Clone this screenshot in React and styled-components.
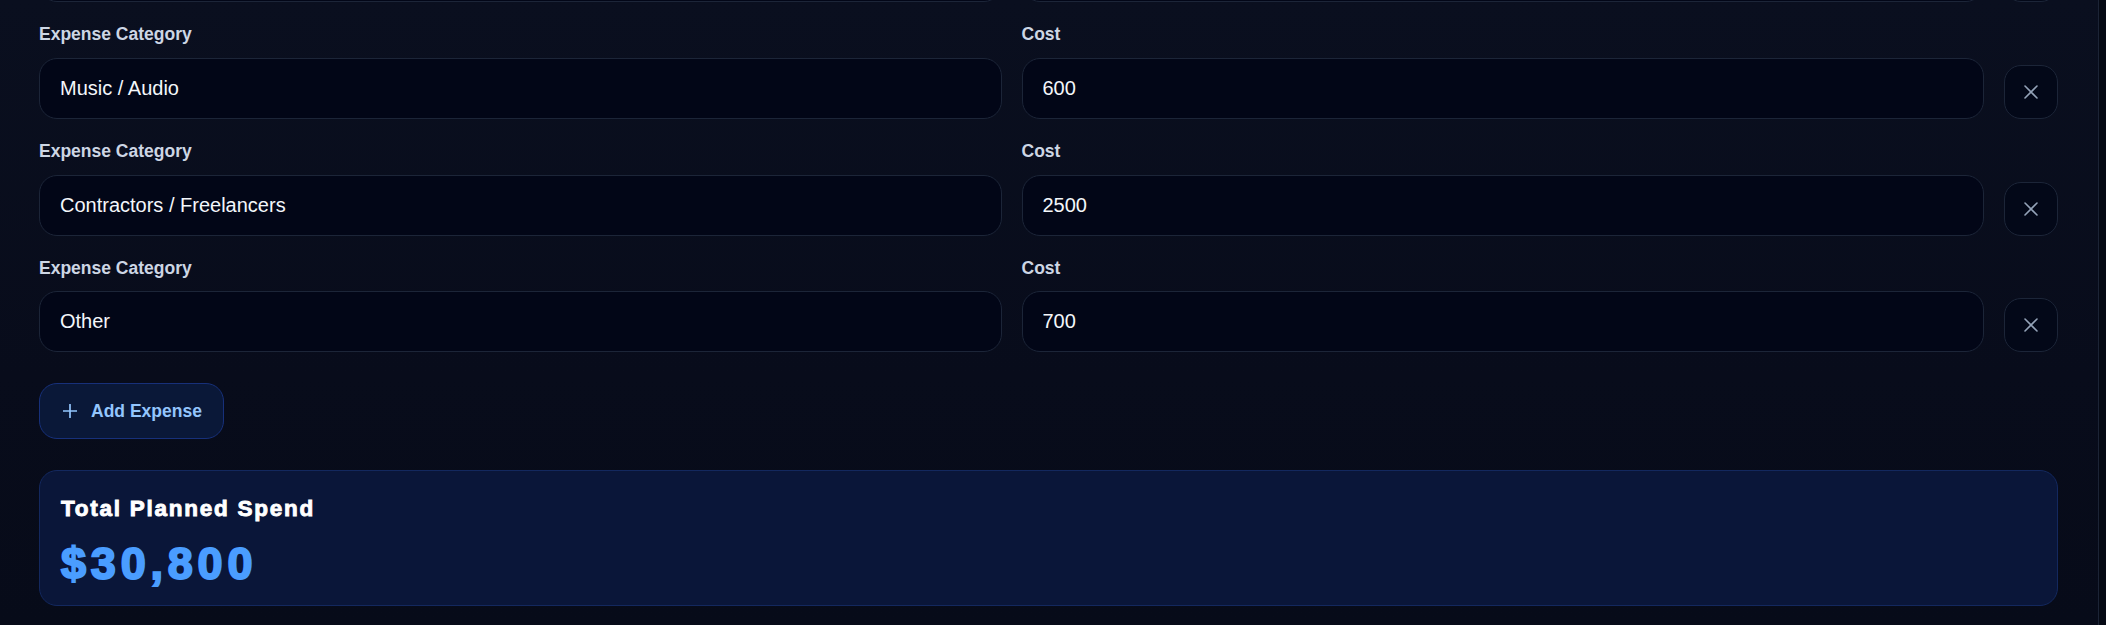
import { useLayoutEffect, useRef, useState } from "react";
import styled, { createGlobalStyle } from "styled-components";

const GlobalStyle = createGlobalStyle`
  * { box-sizing: border-box; }
  html, body {
    margin: 0;
    padding: 0;
    background: #050914;
    font-family: "Liberation Sans", Arial, sans-serif;
    overflow: hidden;
  }
`;

const initialExpenses = [
  { category: "Venue", cost: "12000" },
  { category: "Catering", cost: "8500" },
  { category: "Equipment Rental", cost: "6500" },
  { category: "Music / Audio", cost: "600" },
  { category: "Contractors / Freelancers", cost: "2500" },
  { category: "Other", cost: "700" },
];

const PlusIcon = () => (
  <svg width="14" height="14" viewBox="0 0 14 14" fill="none">
    <path d="M7 0.5v13M0.5 7h13" stroke="currentColor" strokeWidth="1.7" strokeLinecap="round" />
  </svg>
);

const CloseIcon = () => (
  <svg width="14" height="14" viewBox="0 0 14 14" fill="none">
    <path d="M1 1l12 12M13 1L1 13" stroke="currentColor" strokeWidth="1.6" strokeLinecap="round" />
  </svg>
);

const App = () => {
  const [expenses, setExpenses] = useState(initialExpenses);
  const panelRef = useRef(null);

  // the list is shown scrolled down to its last rows
  useLayoutEffect(() => {
    if (panelRef.current) panelRef.current.scrollTop = 365.6;
  }, []);

  const handleChange = (index, field, value) => {
    setExpenses(expenses.map((e, i) => (i === index ? { ...e, [field]: value } : e)));
  };

  const handleRemove = (index) => {
    setExpenses(expenses.filter((_, i) => i !== index));
  };

  const handleAdd = () => {
    setExpenses([...expenses, { category: "", cost: "" }]);
  };

  const total = expenses.reduce((sum, e) => sum + (parseFloat(e.cost) || 0), 0);

  return (
    <>
      <GlobalStyle />
      <Panel ref={panelRef}>
        <ExpenseList>
          {expenses.map((expense, index) => (
            <ExpenseRow key={index}>
              <Field>
                <Label>Expense Category</Label>
                <TextInput
                  type="text"
                  value={expense.category}
                  onChange={(e) => handleChange(index, "category", e.target.value)}
                />
              </Field>
              <Field>
                <Label>Cost</Label>
                <TextInput
                  type="text"
                  value={expense.cost}
                  onChange={(e) => handleChange(index, "cost", e.target.value)}
                />
              </Field>
              <RemoveButton onClick={() => handleRemove(index)} aria-label="Remove expense">
                <CloseIcon />
              </RemoveButton>
            </ExpenseRow>
          ))}
        </ExpenseList>
        <AddButton onClick={handleAdd}>
          <PlusIcon />
          Add Expense
        </AddButton>
        <TotalCard>
          <TotalTitle>Total Planned Spend</TotalTitle>
          <TotalAmount>${total.toLocaleString("en-US")}</TotalAmount>
        </TotalCard>
      </Panel>
    </>
  );
};

export default App;

const Panel = styled.div`
  width: 2099px;
  height: 625px;
  overflow: hidden;
  padding: 40px 40px 40px 39px;
  background: linear-gradient(180deg, #0a0f1f 0%, #080c1b 60%, #070b19 100%);
  border-right: 1px solid #1c2436;
  display: flex;
  flex-direction: column;
  align-items: flex-start;
  gap: 31px;
`;

const ExpenseList = styled.div`
  width: 100%;
  display: flex;
  flex-direction: column;
  gap: 22.3px;
`;

const ExpenseRow = styled.div`
  display: grid;
  grid-template-columns: 1fr 1fr 54px;
  column-gap: 20px;
  align-items: end;
`;

const Field = styled.div`
  display: flex;
  flex-direction: column;
  gap: 13.5px;
`;

const Label = styled.label`
  font-size: 17.5px;
  line-height: 20px;
  font-weight: 700;
  color: #cdd6e4;
`;

const TextInput = styled.input`
  height: 61px;
  width: 100%;
  padding: 0 20px;
  font-family: "Liberation Sans", Arial, sans-serif;
  font-size: 20px;
  color: #f4f7fb;
  background: #020617;
  border: 1px solid #1c2538;
  border-radius: 18px;
  outline: none;
`;

const RemoveButton = styled.button`
  width: 54px;
  height: 54px;
  display: flex;
  align-items: center;
  justify-content: center;
  padding: 0;
  color: #94a3b8;
  background: #030818;
  border: 1px solid #1c2538;
  border-radius: 17px;
  cursor: pointer;
`;

const AddButton = styled.button`
  height: 56px;
  display: flex;
  align-items: center;
  gap: 14px;
  padding: 0 21px 0 23px;
  font-family: "Liberation Sans", Arial, sans-serif;
  font-size: 17.5px;
  line-height: 20px;
  font-weight: 700;
  color: #93c5fd;
  background: #0a1838;
  border: 1px solid #17307a;
  border-radius: 18px;
  cursor: pointer;
  flex-shrink: 0;
`;

const TotalCard = styled.div`
  width: 100%;
  flex-shrink: 0;
  padding: 25px 21px 15px;
  background: #0a1639;
  border: 1px solid #13285e;
  border-radius: 18px;
`;

const TotalTitle = styled.div`
  font-size: 22.5px;
  line-height: 26px;
  font-weight: 900;
  color: #ffffff;
  letter-spacing: 1.75px;
  -webkit-text-stroke: 0.9px #ffffff;
  margin-bottom: 16px;
`;

const TotalAmount = styled.div`
  font-size: 45px;
  line-height: 52px;
  font-weight: 900;
  color: #4a9dff;
  letter-spacing: 4.8px;
  -webkit-text-stroke: 2px #4a9dff;
`;
